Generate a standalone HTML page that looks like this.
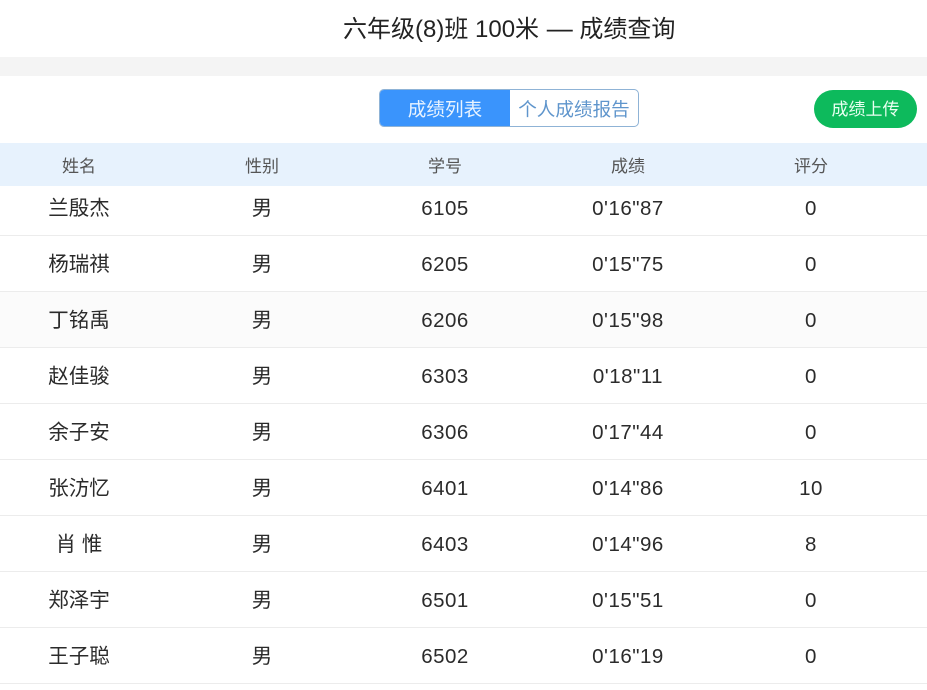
<!DOCTYPE html>
<html lang="zh">
<head>
<meta charset="utf-8">
<style>
html,body{margin:0;padding:0;background:#fff}
body{width:927px;height:690px;position:relative;overflow:hidden;font-family:"Liberation Sans","Noto Sans CJK SC",sans-serif;color:#333}
.t{position:absolute;left:343px;top:12px;font-size:24px;line-height:36px;color:#222;white-space:nowrap}
.t span{font-size:26px;line-height:30px;margin-left:1px}
.band{position:absolute;left:0;top:57px;width:927px;height:19px;background:#f4f4f4}
.tab{position:absolute;left:379px;top:89px;width:258px;height:36px;border:1px solid #8fb3d6;border-radius:5px;overflow:hidden;background:#fff}
.tab div{position:absolute;top:0;height:36px;line-height:39px;font-size:18.6px;text-align:center;white-space:nowrap}
.on{left:0;width:130px;background:#3a94fc;color:#eaf4ff}
.off{left:130px;width:128px;color:#5f95cc}
.up{position:absolute;left:814px;top:90px;width:103px;height:38px;border-radius:19px;background:#0dba5c;color:#e8fff1;font-size:17px;line-height:40px;text-align:center}
.head{position:absolute;left:0;top:143px;width:927px;height:43px;background:#e7f2fd}
.c{position:absolute;width:160px;text-align:center;white-space:nowrap}
.head .c{top:0;line-height:47px;font-size:17px;color:#555}
.r{position:absolute;left:0;width:927px;height:55px;border-bottom:1px solid #ececec}
.r .c{top:0;line-height:58px;font-size:20.5px;color:#2b2b2b}
.r.first .c{line-height:46px}
.c1{left:-1px}.c2{left:182px}.c3{left:365px}.c4{left:548px}.c5{left:731px}
.r .n{letter-spacing:.5px}
</style>
</head>
<body>
<div class="t">六年级(8)班 100米 <span>—</span> 成绩查询</div>
<div class="band"></div>
<div class="tab"><div class="on">成绩列表</div><div class="off">个人成绩报告</div></div>
<div class="up">成绩上传</div>
<div class="head">
<div class="c c1">姓名</div><div class="c c2">性别</div><div class="c c3">学号</div><div class="c c4">成绩</div><div class="c c5">评分</div>
</div>
<div class="r first" style="top:186px;height:49px"><div class="c c1">兰殷杰</div><div class="c c2">男</div><div class="c c3 n">6105</div><div class="c c4 n">0'16"87</div><div class="c c5 n">0</div></div>
<div class="r" style="top:236px"><div class="c c1">杨瑞祺</div><div class="c c2">男</div><div class="c c3 n">6205</div><div class="c c4 n">0'15"75</div><div class="c c5 n">0</div></div>
<div class="r" style="top:292px;background:#fbfbfb"><div class="c c1">丁铭禹</div><div class="c c2">男</div><div class="c c3 n">6206</div><div class="c c4 n">0'15"98</div><div class="c c5 n">0</div></div>
<div class="r" style="top:348px"><div class="c c1">赵佳骏</div><div class="c c2">男</div><div class="c c3 n">6303</div><div class="c c4 n">0'18"11</div><div class="c c5 n">0</div></div>
<div class="r" style="top:404px"><div class="c c1">余子安</div><div class="c c2">男</div><div class="c c3 n">6306</div><div class="c c4 n">0'17"44</div><div class="c c5 n">0</div></div>
<div class="r" style="top:460px"><div class="c c1">张汸忆</div><div class="c c2">男</div><div class="c c3 n">6401</div><div class="c c4 n">0'14"86</div><div class="c c5 n">10</div></div>
<div class="r" style="top:516px"><div class="c c1">肖 惟</div><div class="c c2">男</div><div class="c c3 n">6403</div><div class="c c4 n">0'14"96</div><div class="c c5 n">8</div></div>
<div class="r" style="top:572px"><div class="c c1">郑泽宇</div><div class="c c2">男</div><div class="c c3 n">6501</div><div class="c c4 n">0'15"51</div><div class="c c5 n">0</div></div>
<div class="r" style="top:628px"><div class="c c1">王子聪</div><div class="c c2">男</div><div class="c c3 n">6502</div><div class="c c4 n">0'16"19</div><div class="c c5 n">0</div></div>
</body>
</html>
